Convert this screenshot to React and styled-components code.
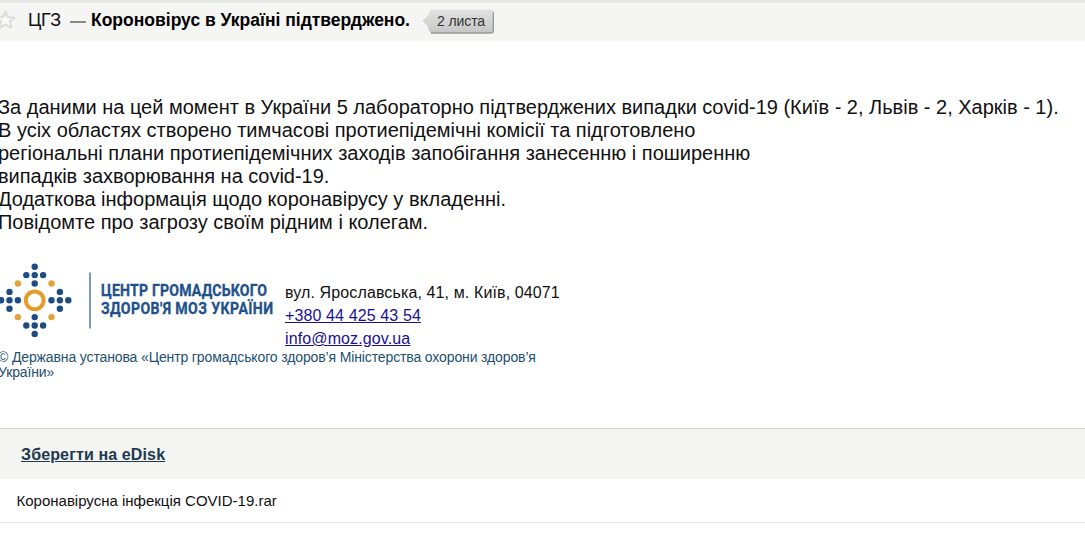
import React from "react";
import styled, { createGlobalStyle } from "styled-components";

const GlobalStyle = createGlobalStyle`
  body {
    margin: 0;
    background: #ffffff;
    color: #111111;
    font-family: "Liberation Sans", Arial, sans-serif;
    overflow: hidden;
  }
`;

const Page = styled.div`
  display: flex;
  flex-direction: column;
  width: 1085px;
  height: 534px;
  overflow: hidden;
`;

const SubjectBar = styled.header`
  display: flex;
  box-sizing: border-box;
  height: 41px;
  border-top: 3px solid #e6e6e2;
  background: #f5f5f4;
  white-space: nowrap;
`;

const StarIcon = styled.svg`
  flex: none;
  width: 28px;
  height: 34px;
`;

const Sender = styled.span`
  width: 41px;
  line-height: 34px;
  font-size: 18px;
  letter-spacing: -0.2px;
`;

const Dash = styled.span`
  width: 16px;
  height: 1.5px;
  margin: 18px 5px 0 1px;
  background: #888888;
`;

const Subject = styled.h1`
  width: 331px;
  margin: 0;
  line-height: 34px;
  font-size: 17.5px;
  color: #000000;
`;

const CountTag = styled.div`
  position: relative;
  width: 73px;
  height: 27px;
  margin-top: 5px;
`;

const TagShape = styled.svg`
  position: absolute;
  inset: 0;
`;

const TagLabel = styled.span`
  position: relative;
  display: block;
  padding-left: 15px;
  line-height: 26px;
  font-size: 14px;
  letter-spacing: -0.1px;
  color: #333333;
`;

const Message = styled.main`
  box-sizing: border-box;
  height: 387px;
  padding-top: 55px;
`;

const Line = styled.p`
  height: 23px;
  margin: 0 0 0 -2px;
  line-height: 23px;
  font-size: 20px;
  letter-spacing: -0.006px;
  white-space: nowrap;
`;

const Signature = styled.div`
  display: flex;
  height: 116px;
`;

const Logo = styled.svg`
  flex: none;
  width: 285px;
  height: 116px;
`;

const Contacts = styled.address`
  display: flex;
  flex-direction: column;
  align-items: flex-start;
  padding-top: 47px;
  font-style: normal;
  font-size: 16px;
  line-height: 23px;
  letter-spacing: 0.12px;
`;

const ContactLink = styled.a`
  color: #180f91;
  text-decoration: underline;
`;

const Copyright = styled.p`
  width: 560px;
  margin: 0 0 0 -2px;
  font-size: 14px;
  letter-spacing: -0.13px;
  line-height: 15px;
  color: #24506f;
`;

const SaveBar = styled.div`
  box-sizing: border-box;
  height: 51px;
  padding-left: 21px;
  border-top: 1px solid #d3d4c1;
  background: #f4f4f2;
  line-height: 51px;
`;

const SaveLink = styled.a`
  font-size: 16px;
  font-weight: bold;
  letter-spacing: 0.13px;
  color: #20394f;
  text-decoration: underline;
`;

const Attachment = styled.div`
  box-sizing: border-box;
  height: 44px;
  padding-left: 16.5px;
  border-bottom: 1px solid #e7e7e7;
  font-size: 15px;
  line-height: 44px;
`;

const blueDots = [
  [0, -4], [-1, -3], [0, -3], [1, -3], [0, -2],
  [0, 4], [-1, 3], [0, 3], [1, 3], [0, 2],
  [-4, 0], [-3, -1], [-3, 0], [-3, 1], [-2, 0],
  [4, 0], [3, -1], [3, 0], [3, 1], [2, 0]
];
const orangeDots = [[-2, -2], [2, -2], [-2, 2], [2, 2]];

const lines = [
  "За даними на цей момент в України 5 лабораторно підтверджених випадки covid-19 (Київ - 2, Львів - 2, Харків - 1).",
  "В усіх областях створено тимчасові протиепідемічні комісії та підготовлено",
  "регіональні плани протиепідемічних заходів запобігання занесенню і поширенню",
  "випадків захворювання на covid-19.",
  "Додаткова інформація щодо коронавірусу у вкладенні.",
  "Повідомте про загрозу своїм рідним і колегам."
];

const renderDots = (dots, color) =>
  dots.map(([x, y]) => (
    <circle key={`${x}${y}`} cx={34.7 + x * 8.4} cy={66.3 + y * 8.4} r="3.2" fill={color} />
  ));

export default function App() {
  return (
    <>
      <GlobalStyle />
      <Page>
        <SubjectBar>
          <StarIcon viewBox="0 0 28 34">
            <path
              d="M5.5 8.5 L8 14 L14.5 14.7 L9.8 18.5 L11.5 25 L5.5 21.5 L-0.5 25 L1 18.5 L-4 14.7 L3 14 Z"
              fill="#f8f8f8"
              stroke="#dddddd"
              strokeWidth="2"
              strokeLinejoin="round"
            />
          </StarIcon>
          <Sender>ЦГЗ</Sender>
          <Dash />
          <Subject>Короновірус в Україні підтверджено.</Subject>
          <CountTag>
            <TagShape width="73" height="27" viewBox="0 0 73 27">
              <defs>
                <linearGradient id="tag" x1="0" y1="0" x2="0" y2="1">
                  <stop offset="0" stopColor="#e3e3e3" />
                  <stop offset="1" stopColor="#c5c5c5" />
                </linearGradient>
              </defs>
              <path
                d="M0.5 13 L6 7.5 L7 4 Q7.5 1.5 10 1.5 H69 Q71.5 1.5 71.5 4 V22.5 Q71.5 25 69 25 H10 Q7.5 25 7 22.5 L6 18.5 Z"
                fill="url(#tag)"
              />
              <path d="M9 25 H69 Q71.3 25 71.3 22.5 V4" fill="none" stroke="#999999" strokeWidth="1.4" />
            </TagShape>
            <TagLabel>2 листа</TagLabel>
          </CountTag>
        </SubjectBar>
        <Message>
          {lines.map((line, index) => (
            <Line key={index}>{line}</Line>
          ))}
          <Signature>
            <Logo viewBox="0 0 285 116">
              {renderDots(blueDots, "#1c4c83")}
              {renderDots(orangeDots, "#e5a13a")}
              <circle cx="34.7" cy="66.3" r="8.9" fill="none" stroke="#e59c2b" strokeWidth="4" />
              <path d="M90 38.5 V94.5" stroke="#5278a0" strokeWidth="1.5" />
              <g
                fill="#1f528b"
                stroke="#1f528b"
                strokeWidth="0.35"
                fontFamily="Roboto, sans-serif"
                fontWeight="700"
                fontSize="16.8"
              >
                <text transform="translate(101 62.2) scale(0.84 1)" textLength="197.6">ЦЕНТР ГРОМАДСЬКОГО</text>
                <text transform="translate(101 80.2) scale(0.84 1)" textLength="204.8">ЗДОРОВ'Я МОЗ УКРАЇНИ</text>
              </g>
            </Logo>
            <Contacts>
              <span>вул. Ярославська, 41, м. Київ, 04071</span>
              <ContactLink href="tel:+380444254354">+380 44 425 43 54</ContactLink>
              <ContactLink href="mailto:info@moz.gov.ua">info@moz.gov.ua</ContactLink>
            </Contacts>
          </Signature>
          <Copyright>
            © Державна установа «Центр громадського здоров’я Міністерства охорони здоров’я
            <br />
            України»
          </Copyright>
        </Message>
        <SaveBar>
          <SaveLink href="#">Зберегти на eDisk</SaveLink>
        </SaveBar>
        <Attachment>Коронавірусна інфекція COVID-19.rar</Attachment>
      </Page>
    </>
  );
}
